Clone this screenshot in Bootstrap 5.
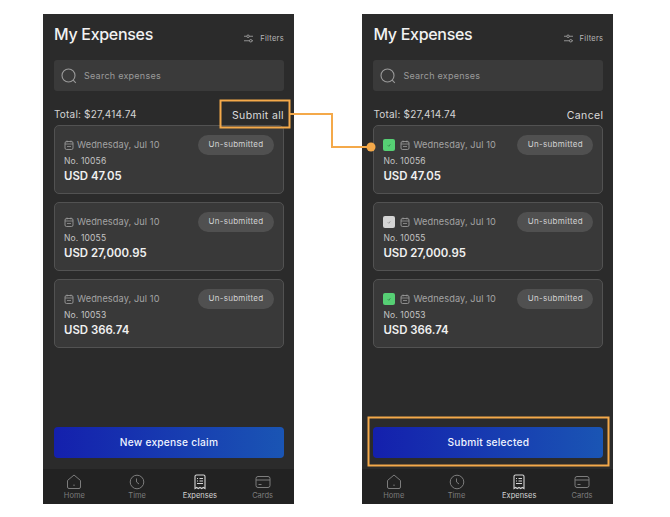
<!DOCTYPE html>
<html lang="en">
<head>
    <meta charset="UTF-8">
    <meta name="viewport" content="width=device-width, initial-scale=1.0">
    <title>My Expenses</title>
    <link href="https://cdn.jsdelivr.net/npm/bootstrap@5.3.3/dist/css/bootstrap.min.css" rel="stylesheet">
    <style>
        body { background: #fff; font-family: Inter, "Liberation Sans", sans-serif; height: 517px; overflow: hidden; }
        .stage { position: relative; width: 670px; height: 517px; padding: 14px 0 0 43px; gap: 68.4px; }
        .phone { width: 251px; height: 490px; background: #2b2b2b; color: #d8d8d8; }
        .phone-main { padding: 0 10px 11px 11px; }
        .head-row { height: 46px; }
        .page-title { font-size: 16px; font-weight: 500; letter-spacing: -.3px; color: #f2f2f2; margin: 0; padding-top: 10px; line-height: 20px; }
        .filter-btn { font-size: 7.5px; color: #b8b8b8; padding-top: 19px; letter-spacing: .3px; gap: 6px; }
        .search-box { height: 31px; background: #3a3a3a; border-radius: 3px; padding-left: 7px; gap: 7px; font-size: 9px; color: #9a9a9a; letter-spacing: .25px; }
        .total-row { height: 34px; padding-top: 16px; font-size: 10px; letter-spacing: .2px; color: #d4d4d4; }
        .total-action { font-size: 10.5px; padding-top: 1px; letter-spacing: .35px; color: #dcdcdc; }
        .expense-list { gap: 8px; }
        .expense { height: 69px; background: #393939; border: 1px solid #525252; border-radius: 5px; padding: 9px 9px 0; }
        .exp-date { font-size: 9.2px; color: #a4a4a4; letter-spacing: .1px; gap: 3px; }
        .exp-no { font-size: 8.5px; color: #c4c4c4; line-height: 12px; letter-spacing: .15px; }
        .exp-amount { font-size: 11.4px; font-weight: 600; color: #f0f0f0; line-height: 16px; margin-top: 1px; }
        .status-pill { height: 20px; padding: 0 10.5px; border-radius: 10px; background: #505050; color: #d2d2d2; font-size: 8px; letter-spacing: .28px; line-height: 19px; }
        .tick { width: 12px; height: 12px; border-radius: 2px; margin-right: 2px; }
        .tick-on { background: #56cf74; color: #2f7a45; }
        .tick-off { background: #d4d4d4; color: #8a8a8a; }
        .tick svg { display: block; }
        .main-btn { height: 31px; border-radius: 4px; background: linear-gradient(90deg, #1420ad, #1a55b4); color: #f0f4ff; font-size: 10.2px; font-weight: 500; letter-spacing: .22px; border: 0; padding: 0; }
        .main-btn:hover { background: linear-gradient(90deg, #1420ad, #1a55b4); color: #f0f4ff; }
        .tabbar { height: 35px; background: #222; }
        .tab-item { width: 63px; font-size: 7.5px; color: #7d7d7d; line-height: 10px; padding-top: 5px; }
        .tab-item svg { display: block; margin-bottom: 1px; }
        .tab-active { color: #d6d6d6; }
        .callouts { position: absolute; left: 0; top: 0; pointer-events: none; }
    </style>
</head>
<body class="m-0">

<svg class="d-none">
    <symbol id="ic-cal" viewBox="0 0 10 10"><rect x="1" y="1.5" width="8" height="8" rx="1.5" fill="none" stroke="currentColor" stroke-width=".8"/><path d="M1 4h8M3 .5v2M7 .5v2M3 6.5h4" stroke="currentColor" stroke-width=".7" fill="none"/></symbol>
    <symbol id="ic-search" viewBox="0 0 16 16"><circle cx="7.5" cy="7.5" r="6.5" fill="none" stroke="currentColor" stroke-width="1.1"/><path d="M12.2 12.2l2.6 2.6" stroke="currentColor" stroke-width="1.1"/></symbol>
    <symbol id="ic-filter" viewBox="0 0 12 10"><path d="M1 2.5h3M7 2.5h4M1 7.5h6M10 7.5h1" stroke="currentColor" stroke-width=".8" fill="none"/><circle cx="5.5" cy="2.5" r="1.4" fill="none" stroke="currentColor" stroke-width=".8"/><circle cx="8.5" cy="7.5" r="1.4" fill="none" stroke="currentColor" stroke-width=".8"/></symbol>
    <symbol id="ic-home" viewBox="0 0 16 16"><path d="M1.500 6.500L8 1l6.500 5.500V13a1.500 1.500 0 0 1-1.500 1.500H3A1.500 1.500 0 0 1 1.500 13z" fill="none" stroke="currentColor" stroke-width="1"/><path d="M8 10.500v1.500" stroke="currentColor" stroke-width="1"/></symbol>
    <symbol id="ic-time" viewBox="0 0 16 16"><circle cx="8" cy="8" r="6.800" fill="none" stroke="currentColor" stroke-width="1"/><path d="M7.500 4.500V8l2.500 2" fill="none" stroke="currentColor" stroke-width="1"/></symbol>
    <symbol id="ic-exp" viewBox="0 0 16 16"><path d="M3 14.500V2.500A1.500 1.500 0 0 1 4.500 1h7A1.500 1.500 0 0 1 13 2.500v12l-1.700-1-1.600 1-1.700-1-1.700 1-1.600-1z" fill="none" stroke="currentColor" stroke-width="1.100"/><path d="M5 4.500h1M7.500 4.500H11M5 7h1M7.500 7H11M5 9.500h6" stroke="currentColor" stroke-width="1" fill="none"/></symbol>
    <symbol id="ic-card" viewBox="0 0 16 16"><rect x="1" y="2.500" width="14" height="11" rx="2" fill="none" stroke="currentColor" stroke-width="1"/><path d="M1 6h14M3.500 10.500h3" stroke="currentColor" stroke-width="1" fill="none"/></symbol>
    <symbol id="ic-check" viewBox="0 0 12 12"><path d="M4.800 6.300l1 1 1.500-2" fill="none" stroke="currentColor" stroke-width=".8"/></symbol>
</svg>

<div class="stage d-flex">

    <div class="phone d-flex flex-column">
        <div class="phone-main d-flex flex-column flex-grow-1">
            <div class="head-row d-flex justify-content-between align-items-start">
                <h1 class="page-title">My Expenses</h1>
                <div class="filter-btn d-flex align-items-center"><svg width="11" height="9"><use href="#ic-filter"/></svg>Filters</div>
            </div>
            <div class="search-box d-flex align-items-center"><svg width="16" height="16"><use href="#ic-search"/></svg>Search expenses</div>
            <div class="total-row d-flex justify-content-between"><span>Total: $27,414.74</span><span class="total-action">Submit all</span></div>
            <div class="expense-list d-flex flex-column">
                <div class="expense">
                    <div class="d-flex justify-content-between align-items-center">
                        <div class="exp-date d-flex align-items-center"><svg width="10" height="10"><use href="#ic-cal"/></svg>Wednesday, Jul 10</div>
                        <span class="status-pill">Un-submitted</span>
                    </div>
                    <div class="exp-no">No. 10056</div>
                    <div class="exp-amount">USD 47.05</div>
                </div>
                <div class="expense">
                    <div class="d-flex justify-content-between align-items-center">
                        <div class="exp-date d-flex align-items-center"><svg width="10" height="10"><use href="#ic-cal"/></svg>Wednesday, Jul 10</div>
                        <span class="status-pill">Un-submitted</span>
                    </div>
                    <div class="exp-no">No. 10055</div>
                    <div class="exp-amount">USD 27,000.95</div>
                </div>
                <div class="expense">
                    <div class="d-flex justify-content-between align-items-center">
                        <div class="exp-date d-flex align-items-center"><svg width="10" height="10"><use href="#ic-cal"/></svg>Wednesday, Jul 10</div>
                        <span class="status-pill">Un-submitted</span>
                    </div>
                    <div class="exp-no">No. 10053</div>
                    <div class="exp-amount">USD 366.74</div>
                </div>
            </div>
            <button class="btn main-btn mt-auto w-100">New expense claim</button>
        </div>
        <div class="tabbar d-flex justify-content-center">
            <div class="tab-item d-flex flex-column align-items-center"><svg width="16" height="16"><use href="#ic-home"/></svg>Home</div>
            <div class="tab-item d-flex flex-column align-items-center"><svg width="16" height="16"><use href="#ic-time"/></svg>Time</div>
            <div class="tab-item tab-active d-flex flex-column align-items-center"><svg width="16" height="16"><use href="#ic-exp"/></svg>Expenses</div>
            <div class="tab-item d-flex flex-column align-items-center"><svg width="16" height="16"><use href="#ic-card"/></svg>Cards</div>
        </div>
    </div>

    <div class="phone d-flex flex-column">
        <div class="phone-main d-flex flex-column flex-grow-1">
            <div class="head-row d-flex justify-content-between align-items-start">
                <h1 class="page-title">My Expenses</h1>
                <div class="filter-btn d-flex align-items-center"><svg width="11" height="9"><use href="#ic-filter"/></svg>Filters</div>
            </div>
            <div class="search-box d-flex align-items-center"><svg width="16" height="16"><use href="#ic-search"/></svg>Search expenses</div>
            <div class="total-row d-flex justify-content-between"><span>Total: $27,414.74</span><span class="total-action">Cancel</span></div>
            <div class="expense-list d-flex flex-column">
                <div class="expense">
                    <div class="d-flex justify-content-between align-items-center">
                        <div class="exp-date d-flex align-items-center"><span class="tick tick-on"><svg width="12" height="12"><use href="#ic-check"/></svg></span><svg width="10" height="10"><use href="#ic-cal"/></svg>Wednesday, Jul 10</div>
                        <span class="status-pill">Un-submitted</span>
                    </div>
                    <div class="exp-no">No. 10056</div>
                    <div class="exp-amount">USD 47.05</div>
                </div>
                <div class="expense">
                    <div class="d-flex justify-content-between align-items-center">
                        <div class="exp-date d-flex align-items-center"><span class="tick tick-off"><svg width="12" height="12"><use href="#ic-check"/></svg></span><svg width="10" height="10"><use href="#ic-cal"/></svg>Wednesday, Jul 10</div>
                        <span class="status-pill">Un-submitted</span>
                    </div>
                    <div class="exp-no">No. 10055</div>
                    <div class="exp-amount">USD 27,000.95</div>
                </div>
                <div class="expense">
                    <div class="d-flex justify-content-between align-items-center">
                        <div class="exp-date d-flex align-items-center"><span class="tick tick-on"><svg width="12" height="12"><use href="#ic-check"/></svg></span><svg width="10" height="10"><use href="#ic-cal"/></svg>Wednesday, Jul 10</div>
                        <span class="status-pill">Un-submitted</span>
                    </div>
                    <div class="exp-no">No. 10053</div>
                    <div class="exp-amount">USD 366.74</div>
                </div>
            </div>
            <button class="btn main-btn mt-auto w-100">Submit selected</button>
        </div>
        <div class="tabbar d-flex justify-content-center">
            <div class="tab-item d-flex flex-column align-items-center"><svg width="16" height="16"><use href="#ic-home"/></svg>Home</div>
            <div class="tab-item d-flex flex-column align-items-center"><svg width="16" height="16"><use href="#ic-time"/></svg>Time</div>
            <div class="tab-item tab-active d-flex flex-column align-items-center"><svg width="16" height="16"><use href="#ic-exp"/></svg>Expenses</div>
            <div class="tab-item d-flex flex-column align-items-center"><svg width="16" height="16"><use href="#ic-card"/></svg>Cards</div>
        </div>
    </div>

    <!-- orange annotations drawn over both phones -->
    <svg class="callouts" width="670" height="517" fill="none" stroke="#f4a94a" stroke-width="2">
        <rect x="220.500" y="100.500" width="69" height="27"/>
        <path d="M290 114H332V147H371"/>
        <circle cx="371" cy="147" r="4.500" fill="#f4a94a" stroke="none"/>
        <rect x="368.500" y="417.500" width="240" height="48"/>
    </svg>
</div>

<script src="https://cdn.jsdelivr.net/npm/bootstrap@5.3.3/dist/js/bootstrap.bundle.min.js"></script>
</body>
</html>
